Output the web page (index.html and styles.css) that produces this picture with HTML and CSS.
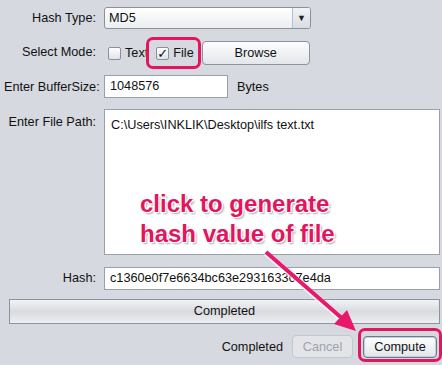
FILE: index.html
```html
<!DOCTYPE html>
<html lang="en">
<head>
    <meta charset="UTF-8">
    <title>Hash Calculator</title>
    <link rel="stylesheet" href="styles.css">
</head>
<body>
    <div class="window">
        <div class="form">
            <label class="lbl">Hash Type:</label>
            <div class="combo">
                <span>MD5</span>
                <span class="combo-arrow">&#9660;</span>
            </div>

            <label class="lbl">Select Mode:</label>
            <div class="mode-row">
                <span class="check"></span><span class="check-text">Text</span>
                <span class="check checked">&#10003;</span><span class="check-text">File</span>
                <button class="btn browse">Browse</button>
            </div>

            <label class="lbl">Enter BufferSize:</label>
            <div class="buffer-row">
                <div class="field buffer">1048576</div>
                <span>Bytes</span>
            </div>

            <label class="lbl lbl-top">Enter File Path:</label>
            <div class="field area">C:\Users\INKLIK\Desktop\ilfs text.txt</div>

            <label class="lbl">Hash:</label>
            <div class="field hash">c1360e0f7e6634bc63e293163367e4da</div>
        </div>

        <div class="progress">Completed</div>

        <div class="bottom-row">
            <span>Completed</span>
            <button class="btn cancel" disabled>Cancel</button>
            <button class="btn compute">Compute</button>
        </div>
    </div>

    <!-- annotations drawn over the screenshot -->
    <div class="mark mark-file"></div>
    <div class="mark mark-compute"></div>
    <div class="note">click to generate<br>hash value of file</div>
    <svg class="arrow" width="442" height="365" viewBox="0 0 442 365">
        <line x1="266" y1="253" x2="344" y2="321" stroke="#fff" stroke-width="6" opacity="0.7"/>
        <line x1="266" y1="252" x2="344" y2="320" stroke="#e8186a" stroke-width="4"/>
        <polygon points="356,331 334,324 347,310" fill="#e8186a"/>
    </svg>
</body>
</html>
```

FILE: styles.css
```css
body {
    margin: 0;
    width: 442px;
    height: 365px;
    background-color: #d6d9e0;
    font-family: "Liberation Sans", Arial, sans-serif;
    font-size: 12.7px;
    color: #111;
    position: relative;
    overflow: hidden;
}
.window {
    padding: 7px 2px 0 4px;
}
.form {
    display: grid;
    grid-template-columns: 92px 336px;
    column-gap: 8px;
    row-gap: 10px;
    align-items: center;
}
.lbl {
    text-align: right;
    white-space: nowrap;
}
.lbl-top {
    align-self: start;
    padding-top: 7px;
}
.combo {
    width: 207px;
    height: 22px;
    box-sizing: border-box;
    border: 1px solid #8a919c;
    border-radius: 3px;
    background: linear-gradient(#ffffff, #eceef1);
    display: flex;
    align-items: center;
    justify-content: space-between;
    padding-left: 4px;
}
.combo-arrow {
    width: 17px;
    height: 20px;
    border-left: 1px solid #b8bec7;
    background: linear-gradient(#f2f3f5, #d9dce2);
    font-size: 9px;
    color: #222;
    display: flex;
    align-items: center;
    justify-content: center;
    border-radius: 0 2px 2px 0;
}
.mode-row {
    display: flex;
    align-items: center;
    height: 24px;
    margin: 2px 0 0 4px;
}
.check {
    width: 13px;
    height: 13px;
    box-sizing: border-box;
    border: 1px solid #8a919c;
    border-radius: 2px;
    background: linear-gradient(#ffffff, #dfe2e7);
    display: flex;
    align-items: center;
    justify-content: center;
    font-size: 13px;
    font-weight: bold;
    font-family: "DejaVu Sans", sans-serif;
    line-height: 1;
    color: #111;
}
.check-text {
    margin-left: 4px;
    margin-right: 9px;
}
.check.checked {
    margin-left: -1px;
}
.btn {
    font-family: "Liberation Sans", Arial, sans-serif;
    font-size: 12.7px;
    color: #111;
    border: 1px solid #8c939e;
    border-radius: 4px;
    background: linear-gradient(#fdfdfd, #e3e6ea);
    padding: 0;
}
.browse {
    width: 108px;
    height: 24px;
    margin-left: -1px;
}
.buffer-row {
    display: flex;
    align-items: center;
    gap: 9px;
}
.field {
    background-color: #fff;
    border: 1px solid #9aa0a9;
    box-sizing: border-box;
    padding-left: 5px;
}
.buffer {
    width: 124px;
    height: 23px;
    line-height: 21px;
}
.area {
    height: 146px;
    padding: 8px 6px;
    margin-top: 1px;
}
.hash {
    height: 23px;
    line-height: 21px;
    margin-top: 2px;
}
.progress {
    margin: 9px 0 0 5px;
    width: 431px;
    height: 25px;
    box-sizing: border-box;
    border: 1px solid #8c939e;
    background: linear-gradient(#f2f3f5, #d9dbe0 50%, #eceef1);
    text-align: center;
    line-height: 23px;
}
.bottom-row {
    display: flex;
    justify-content: flex-end;
    align-items: center;
    gap: 9px;
    margin-top: 11px;
    padding-right: 3px;
}
.cancel {
    width: 61px;
    height: 23px;
    color: #9ea3ab;
    border-color: #c3c7ce;
    background: #e2e4e8;
}
.compute {
    width: 74px;
    height: 22px;
    margin-left: 1px;
    border-color: #6f7a89;
    box-shadow: inset 0 0 0 1px #bcd0e8;
}
.mark {
    position: absolute;
    border: 3px solid #e3155f;
    border-radius: 7px;
}
.mark-file {
    left: 146px;
    top: 37px;
    width: 49px;
    height: 26px;
}
.mark-compute {
    left: 358px;
    top: 328px;
    width: 78px;
    height: 28px;
}
.note {
    position: absolute;
    left: 140px;
    top: 189px;
    font-family: "Liberation Sans", Arial, sans-serif;
    font-weight: bold;
    font-size: 24px;
    line-height: 30px;
    color: #e3155f;
    text-shadow: 1px 1px 0 #fff, -1px -1px 0 #fff, 1px -1px 0 #fff, -1px 1px 0 #fff, 2px 2px 2px rgba(0,0,0,0.35);
}
.arrow {
    position: absolute;
    left: 0;
    top: 0;
}
```
